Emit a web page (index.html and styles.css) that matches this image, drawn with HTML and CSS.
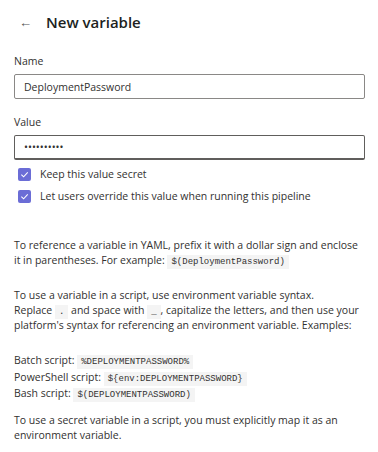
FILE: index.html
```html
<!DOCTYPE html>
<html>
<head>
  <meta charset="UTF-8">
  <title>New variable</title>
  <link rel="stylesheet" href="styles.css">
</head>
<body>
  <div class="panel">
    <div class="header">
      <span class="back">&#8592;</span>
      <h1>New variable</h1>
    </div>

    <div class="field">
      <label for="varName">Name</label>
      <input type="text" id="varName" value="DeploymentPassword">
    </div>

    <div class="field">
      <label for="varValue">Value</label>
      <input type="password" id="varValue" class="focused" value="1234567890">
    </div>

    <div class="checks">
      <div class="check">
        <span class="box"><svg width="9" height="9" viewBox="0 0 10 10"><path d="M1.5 5.2 L4 7.6 L8.6 2.6" fill="none" stroke="#fff" stroke-width="1.2"/></svg></span>
        <span>Keep this value secret</span>
      </div>
      <div class="check">
        <span class="box"><svg width="9" height="9" viewBox="0 0 10 10"><path d="M1.5 5.2 L4 7.6 L8.6 2.6" fill="none" stroke="#fff" stroke-width="1.2"/></svg></span>
        <span>Let users override this value when running this pipeline</span>
      </div>
    </div>

    <p class="help first">To reference a variable in YAML, prefix it with a dollar sign and enclose it in parentheses. For example: <code>$(DeploymentPassword)</code></p>

    <p class="help">To use a variable in a script, use environment variable syntax.<br>Replace <code>.</code> and space with <code>_</code>, capitalize the letters, and then use your platform's syntax for referencing an environment variable. Examples:</p>

    <div class="help examples">
      <div>Batch script: <code>%DEPLOYMENTPASSWORD%</code></div>
      <div>PowerShell script: <code>${env:DEPLOYMENTPASSWORD}</code></div>
      <div>Bash script: <code>$(DEPLOYMENTPASSWORD)</code></div>
    </div>

    <p class="help last">To use a secret variable in a script, you must explicitly map it as an environment variable.</p>
  </div>
</body>
</html>
```

FILE: styles.css
```css
body {
  margin: 0;
  background: #fff;
  font-family: "Open Sans", "Noto Sans", sans-serif;
  font-size: 10.5px;
  color: #323130;
}
.panel {
  padding: 0 13px 0 14px;
}
.header {
  display: flex;
  align-items: center;
  height: 44px;
}
.back {
  width: 27px;
  padding-left: 5px;
  font-size: 13px;
  color: #555;
}
h1 {
  margin: 0;
  font-size: 15px;
  font-weight: 600;
  color: #201f1e;
}
.field {
  margin-top: 9px;
}
.field + .field {
  margin-top: 15px;
}
label {
  display: block;
  line-height: 16px;
  margin-bottom: 5px;
}
input {
  display: block;
  box-sizing: border-box;
  width: 100%;
  height: 25px;
  margin: 0;
  padding: 0 9px;
  border: 1px solid #8a8886;
  border-radius: 2px;
  font-family: inherit;
  font-size: 10.5px;
  color: #323130;
}
input.focused {
  border-color: #605e5c;
  border-bottom-width: 2px;
}
.checks {
  margin-top: 6px;
  display: grid;
  gap: 6px;
}
.check {
  display: flex;
  align-items: center;
  height: 16px;
  gap: 9px;
  padding-left: 4px;
}
.box {
  width: 13px;
  height: 13px;
  border-radius: 2px;
  background: #6b6dd6;
  display: flex;
  align-items: center;
  justify-content: center;
}
.help {
  margin: 20px 0 0;
  line-height: 15px;
}
.help.first {
  margin-top: 34px;
}
.examples {
  margin-top: 19px;
  line-height: 16.5px;
}
.help.last {
  margin-top: 11px;
}
code {
  font-family: "Liberation Mono", "DejaVu Sans Mono", monospace;
  font-size: 9px;
  line-height: 1;
  background: #f4f4f4;
  color: #323130;
  padding: 2px 4px;
}
```
